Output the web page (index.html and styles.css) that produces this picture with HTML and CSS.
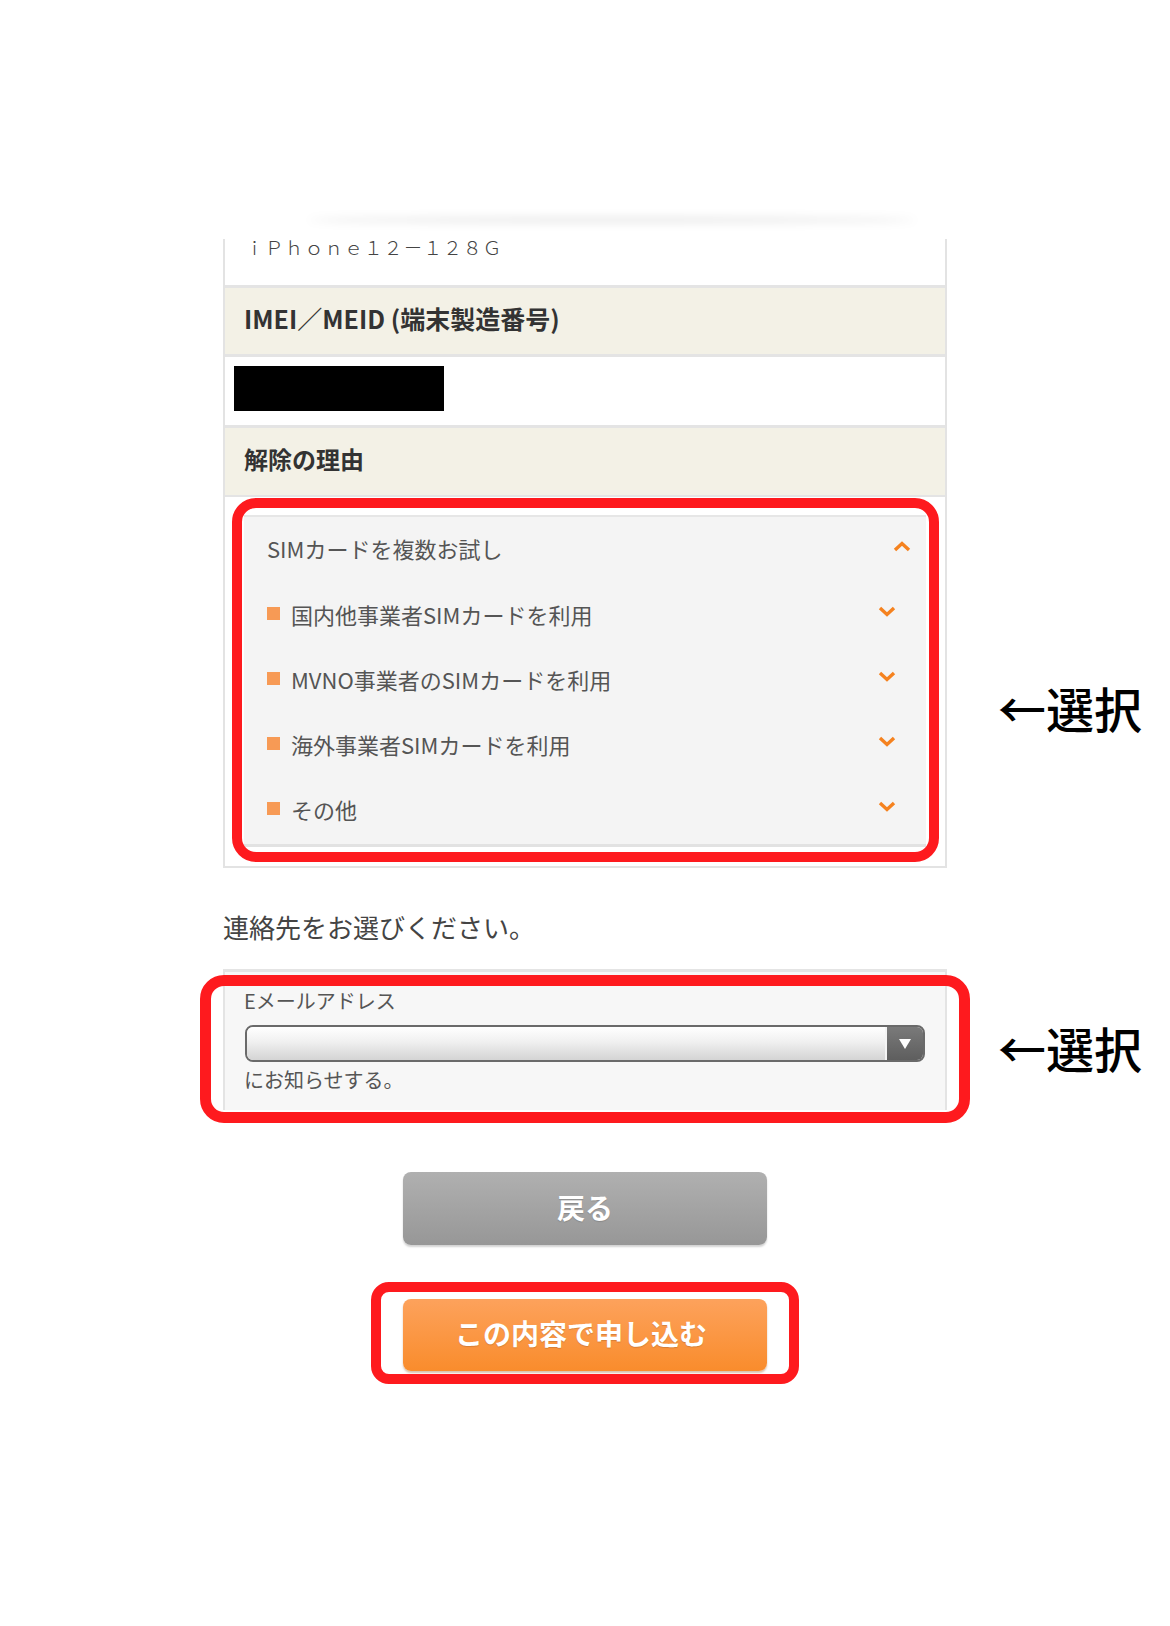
FILE: index.html
```html
<!DOCTYPE html>
<html lang="ja">
<head>
<meta charset="utf-8">
<title>解除の理由</title>
<link rel="stylesheet" href="styles.css">
</head>
<body>
<div class="page">
  <div class="topshadow"></div>

  <div class="card">
    <div class="row model">ｉＰｈｏｎｅ１２－１２８Ｇ</div>
    <div class="row head">IMEI／MEID (端末製造番号)</div>
    <div class="row imei"><span class="redact"></span></div>
    <div class="row head head-last">解除の理由</div>
    <div class="reason-wrap">
      <div class="acc">
        <div class="acc-head">
          <span>SIMカードを複数お試し</span>
          <svg class="chev up" width="18" height="11" viewBox="0 0 18 11"><polyline points="2,9 9,2.5 16,9" fill="none" stroke="#f5821f" stroke-width="3.4"/></svg>
        </div>
        <div class="acc-item">
          <span class="sq"></span><span class="lbl">国内他事業者SIMカードを利用</span>
          <svg class="chev" width="18" height="11" viewBox="0 0 18 11"><polyline points="2,2 9,8.5 16,2" fill="none" stroke="#f5821f" stroke-width="3.4"/></svg>
        </div>
        <div class="acc-item">
          <span class="sq"></span><span class="lbl">MVNO事業者のSIMカードを利用</span>
          <svg class="chev" width="18" height="11" viewBox="0 0 18 11"><polyline points="2,2 9,8.5 16,2" fill="none" stroke="#f5821f" stroke-width="3.4"/></svg>
        </div>
        <div class="acc-item">
          <span class="sq"></span><span class="lbl">海外事業者SIMカードを利用</span>
          <svg class="chev" width="18" height="11" viewBox="0 0 18 11"><polyline points="2,2 9,8.5 16,2" fill="none" stroke="#f5821f" stroke-width="3.4"/></svg>
        </div>
        <div class="acc-item">
          <span class="sq"></span><span class="lbl">その他</span>
          <svg class="chev" width="18" height="11" viewBox="0 0 18 11"><polyline points="2,2 9,8.5 16,2" fill="none" stroke="#f5821f" stroke-width="3.4"/></svg>
        </div>
      </div>
    </div>
  </div>

  <p class="contact-label">連絡先をお選びください。</p>

  <div class="contact-box">
    <div class="cb-label">Eメールアドレス</div>
    <div class="select">
      <div class="select-field"></div>
      <div class="select-btn"><svg width="14" height="12" viewBox="0 0 14 12"><polygon points="1,1 13,1 7,11" fill="#fff"/></svg></div>
    </div>
    <div class="cb-note">にお知らせする。</div>
  </div>

  <div class="buttons">
    <div class="btn btn-back">戻る</div>
    <div class="btn btn-apply">この内容で申し込む</div>
  </div>

  <div class="mark mark1"></div>
  <div class="mark mark2"></div>
  <div class="mark mark3"></div>
  <div class="note note1">←選択</div>
  <div class="note note2">←選択</div>
</div>
</body>
</html>
```

FILE: styles.css
```css
html, body {
  margin: 0;
  padding: 0;
  background: #fff;
}
body {
  font-family: "Noto Sans CJK JP", "Noto Sans", sans-serif;
  color: #444;
}
.page {
  position: relative;
  width: 1170px;
  height: 1626px;
  overflow: hidden;
}
.topshadow {
  width: 610px;
  height: 6px;
  margin: 217px 0 0 307px;
  background: rgba(0, 0, 0, 0.09);
  filter: blur(4px);
  border-radius: 50%;
}
.card {
  width: 724px;
  margin: 16px auto 0;
  box-sizing: border-box;
  border-left: 2px solid #e3e3e3;
  border-right: 2px solid #e3e3e3;
  border-bottom: 2px solid #e3e3e3;
  background: #fff;
}
.row {
  box-sizing: content-box;
  border-bottom: 3px solid #e4e4e4;
}
.model {
  height: 46px;
  padding-left: 20px;
  font-size: 19px;
  line-height: 16px;
  letter-spacing: 0.8px;
  color: #444;
  font-weight: 300;
}
.head {
  height: 60px;
  padding-bottom: 6px;
  display: flex;
  align-items: center;
  padding-left: 19px;
  background: #f3f1e6;
  font-size: 25px;
  font-weight: 700;
  color: #333;
}
.head-last {
  height: 61px;
  font-size: 24px;
  border-bottom-width: 2px;
}
.imei {
  height: 68px;
  padding-left: 9px;
  display: flex;
  align-items: center;
}
.redact {
  display: block;
  width: 210px;
  height: 45px;
  background: #000;
  margin-top: -5px;
}
.reason-wrap {
  padding: 18px 19px 19px;
}
.acc {
  background: #f4f4f4;
  border-top: 2px solid #e6e6e6;
  border-bottom: 3px solid #e2e2e2;
}
.acc-head {
  height: 61px;
  padding: 0 15px 6px 23px;
  display: flex;
  align-items: center;
  justify-content: space-between;
  font-size: 22px;
  color: #555;
}
.acc-item {
  height: 59px;
  display: flex;
  align-items: center;
  padding: 0 30px 6px 23px;
  font-size: 22px;
  color: #555;
}
.acc-item .lbl {
  flex: 1;
}
.sq {
  width: 13px;
  height: 13px;
  background: #f79a55;
  margin-right: 11px;
}
.chev {
  display: block;
  margin-bottom: 4px;
}
.chev.up {
  margin-bottom: 2px;
}
.contact-label {
  margin: 41px 0 0 223px;
  font-size: 26px;
  line-height: 36px;
  color: #444;
}
.contact-box {
  width: 724px;
  margin: 24px auto 0;
  box-sizing: border-box;
  border-top: 3px solid #e4e4e4;
  border-left: 2px solid #e4e4e4;
  border-right: 2px solid #e4e4e4;
  background: #f7f7f7;
  padding: 16px 20px 16px 19px;
  height: 141px;
}
.cb-label, .cb-note {
  font-size: 20px;
  line-height: 26px;
  color: #555;
}
.select {
  margin: 11px 0 5px 1px;
  height: 37px;
  box-sizing: border-box;
  border: 2px solid #6a6a6a;
  border-radius: 8px;
  display: flex;
  overflow: hidden;
}
.select-field {
  flex: 1;
  background: linear-gradient(#ffffff, #f0f0f0 45%, #d4d4d4);
  border-right: 2px solid #f4f4f4;
}
.select-btn {
  width: 36px;
  background: linear-gradient(#7a7a7a, #5e5e5e);
  display: flex;
  align-items: center;
  justify-content: center;
}
.buttons {
  display: flex;
  flex-direction: column;
  align-items: center;
  margin-top: 62px;
  gap: 54px;
}
.btn {
  width: 364px;
  height: 73px;
  border-radius: 8px;
  box-sizing: border-box;
  padding-bottom: 4px;
  display: flex;
  align-items: center;
  justify-content: center;
  color: #fff;
  font-size: 28px;
  font-weight: 700;
  text-shadow: 0 1px 1px rgba(0, 0, 0, 0.15);
  box-shadow: 0 2px 2px rgba(0, 0, 0, 0.18);
}
.btn-back {
  background: linear-gradient(#b0b0b0, #979797);
}
.btn-apply {
  height: 72px;
  padding-right: 8px;
  background: linear-gradient(#fda25c, #f98c2c);
  box-shadow: 0 2px 2px rgba(150, 80, 20, 0.35);
}
.mark {
  position: absolute;
  box-sizing: border-box;
  border: 10px solid #fe1a1e;
}
.mark1 {
  left: 232px;
  top: 498px;
  width: 707px;
  height: 364px;
  border-radius: 24px;
}
.mark2 {
  left: 200px;
  top: 975px;
  width: 770px;
  height: 148px;
  border-width: 11px;
  border-radius: 24px;
}
.mark3 {
  left: 371px;
  top: 1282px;
  width: 428px;
  height: 102px;
  border-radius: 18px;
}
.note {
  position: absolute;
  left: 998px;
  font-size: 48px;
  line-height: 56px;
  font-weight: 500;
  color: #000;
}
.note1 { top: 679px; }
.note2 { top: 1019px; }
```
